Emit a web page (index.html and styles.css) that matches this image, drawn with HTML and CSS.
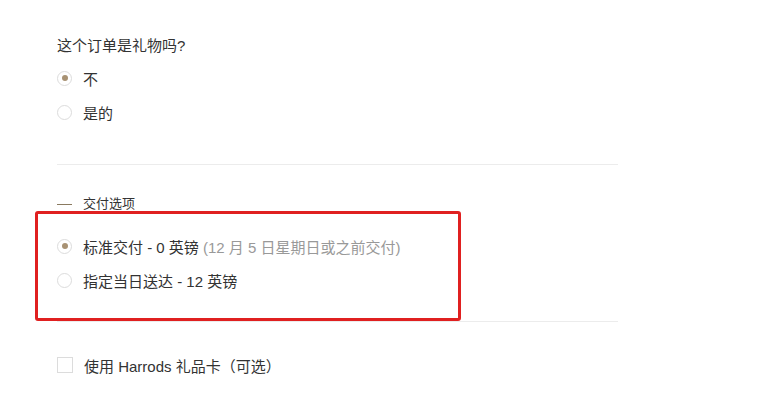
FILE: index.html
```html
<!DOCTYPE html>
<html lang="zh-CN">
<head>
    <meta charset="UTF-8">
    <meta name="viewport" content="width=device-width, initial-scale=1.0">
    <title>结账</title>
    <link rel="stylesheet" href="styles.css">
</head>
<body>
    <div class="checkout">
        <section class="block gift">
            <p class="question">这个订单是礼物吗?</p>
            <label class="option">
                <span class="radio checked"></span>
                <span>不</span>
            </label>
            <label class="option">
                <span class="radio"></span>
                <span>是的</span>
            </label>
        </section>

        <section class="block delivery">
            <p class="legend"><span class="dash"></span>交付选项</p>
            <div class="choices">
                <label class="option">
                    <span class="radio checked"></span>
                    <span>标准交付 - 0 英镑 <span class="note">(12 月 5 日星期日或之前交付)</span></span>
                </label>
                <label class="option">
                    <span class="radio"></span>
                    <span>指定当日送达 - 12 英镑</span>
                </label>
                <div class="highlight"></div>
            </div>
        </section>

        <section class="block card">
            <label class="option">
                <span class="checkbox"></span>
                <span>使用 Harrods 礼品卡（可选）</span>
            </label>
        </section>
    </div>
</body>
</html>
```

FILE: styles.css
```css
body {
    margin: 0;
    background-color: #fff;
    font-family: "Liberation Sans", "Noto Sans CJK SC", sans-serif;
    color: #333;
    font-size: 15px;
}

.checkout {
    width: 561px;
    margin-left: 57px;
}

.block {
    border-bottom: 1px solid #ececec;
}

.gift {
    padding-top: 35px;
    padding-bottom: 35px;
}

.question {
    margin: 0 0 4px;
    line-height: 22px;
}

.option {
    display: flex;
    align-items: center;
    gap: 11px;
    height: 34px;
    cursor: pointer;
}

.radio {
    width: 15px;
    height: 15px;
    border: 1px solid #dcdcdc;
    border-radius: 50%;
    box-sizing: border-box;
    display: flex;
    justify-content: center;
    align-items: center;
    flex-shrink: 0;
}

.radio.checked::after {
    content: "";
    width: 6px;
    height: 6px;
    border-radius: 50%;
    background-color: #a89273;
}

.checkbox {
    width: 16px;
    height: 16px;
    border: 1px solid #dcdcdc;
    box-sizing: border-box;
    flex-shrink: 0;
}

.delivery {
    padding-top: 28px;
    padding-bottom: 24px;
}

.legend {
    margin: 0 0 14px;
    font-size: 13px;
    line-height: 22px;
    display: flex;
    align-items: center;
}

.dash {
    display: inline-block;
    width: 15px;
    height: 1px;
    background-color: #8a7a60;
    margin-right: 11px;
}

.choices {
    position: relative;
}

.note {
    color: #999;
}

.highlight {
    position: absolute;
    left: -22px;
    top: -18px;
    width: 426px;
    height: 110px;
    border: 3px solid #e02020;
    border-radius: 3px;
    box-sizing: border-box;
}

.card {
    border-bottom: none;
    padding-top: 26px;
}
```
